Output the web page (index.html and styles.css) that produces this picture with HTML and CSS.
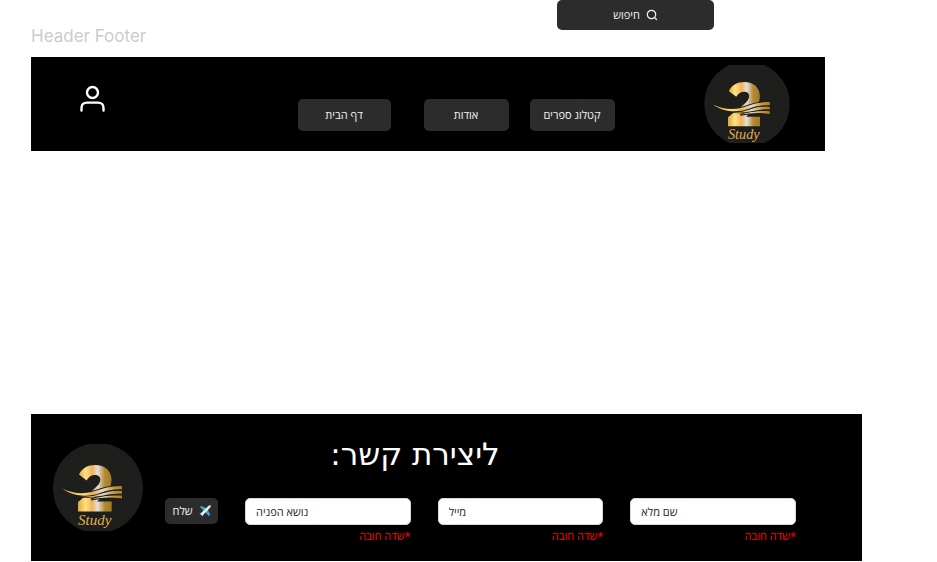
FILE: index.html
```html
<!DOCTYPE html>
<html lang="he">
<head>
<meta charset="utf-8">
<title>2 Study</title>
<link rel="stylesheet" href="styles.css">
</head>
<body>
<svg class="defs" aria-hidden="true">
  <defs>
    <linearGradient id="gold" gradientUnits="userSpaceOnUse" x1="25" y1="0" x2="59" y2="0">
      <stop offset="0" stop-color="#d9a93c"/>
      <stop offset=".22" stop-color="#ffe083"/>
      <stop offset=".42" stop-color="#eeb45c"/>
      <stop offset=".58" stop-color="#e4e0dc"/>
      <stop offset=".78" stop-color="#b58a35"/>
      <stop offset="1" stop-color="#a07a26"/>
    </linearGradient>
    <linearGradient id="wave" gradientUnits="userSpaceOnUse" x1="9" y1="0" x2="69" y2="0">
      <stop offset="0" stop-color="#c99a35"/>
      <stop offset=".35" stop-color="#ffe083"/>
      <stop offset=".5" stop-color="#e9b055"/>
      <stop offset=".68" stop-color="#e4dccb"/>
      <stop offset=".85" stop-color="#c79a3f"/>
      <stop offset="1" stop-color="#a67c28"/>
    </linearGradient>
    <symbol id="emblem" viewBox="0 0 90 90">
      <circle cx="45" cy="45" r="45" fill="#1e1e1c"/>
      <path fill="url(#gold)" d="M26 31.500C29 25 35 22 42 22C52 22 58.500 28 58.500 36.500C58.500 43 56 47 51 51.500L44 58.500H58.700V68.500H25V59L41 46C45 42.500 47.300 40 47.300 36.500C47.300 33.500 45 32 42 32C38.500 32 36 33.500 33.700 37.500Z"/>
      <g fill="url(#wave)" stroke="#1e1e1c" stroke-width="2" paint-order="stroke">
        <path d="M38 56.500C48 52.500 57 52 69 52.600V55.600C58 53.800 48 54.500 38 56.500Z"/>
        <path d="M27 53C44 53.500 50 46.800 69 47.800V50.800C52 49.500 44 56.500 27 53Z"/>
        <path d="M9 45.500C25 53 37 50 47 46.500C55 43.800 62 43 69 43V46.300C61 46 55 47 47 50C35 54.500 20 53.500 9 45.500Z"/>
      </g>
    </symbol>
  </defs>
</svg>

<div class="board">
  <div class="top">
    <h2 class="board-name">Header Footer</h2>
    <button class="btn search" type="button">
      <svg width="12" height="12" viewBox="0 0 12 12" aria-hidden="true"><g fill="none" stroke="#f3f3f3" stroke-width="1.200" stroke-linecap="round"><circle cx="5.500" cy="5.500" r="4.200"/><path d="M8.700 8.700L10.500 10.500"/></g></svg>
      <span dir="rtl">חיפוש</span>
    </button>
  </div>

  <header class="header">
    <a class="account" href="#" aria-label="חשבון">
      <svg width="26" height="28" viewBox="0 0 26 28" aria-hidden="true"><g fill="none" stroke="#fff" stroke-width="2.400" stroke-linecap="round"><circle cx="12.500" cy="7.500" r="5.500"/><path d="M1.500 25.500V23C1.500 19.500 3.500 17.600 7 17.600H18C21.500 17.600 23.500 19.500 23.500 23V25.500"/></g></svg>
    </a>
    <nav class="nav">
      <button class="btn home" type="button" dir="rtl">דף הבית</button>
      <button class="btn about" type="button" dir="rtl">אודות</button>
      <button class="btn catalog" type="button" dir="rtl">קטלוג ספרים</button>
    </nav>
    <svg class="logo" viewBox="0 4 90 82" role="img" aria-label="2 Study"><use href="#emblem" width="90" height="90"/><text class="script" x="25" y="82">Study</text></svg>
  </header>

  <main class="content"></main>

  <footer class="footer">
    <svg class="footer-logo" viewBox="0 1 90 87" role="img" aria-label="2 Study"><use href="#emblem" width="90" height="90"/><text class="script" x="25" y="82">Study</text></svg>
    <form class="contact">
      <h1 class="title" dir="rtl">ליצירת קשר:</h1>
      <div class="fields">
        <button class="btn send" type="button">
          <span dir="rtl">שלח</span>
          <svg width="12" height="12" viewBox="0 0 12 12" aria-hidden="true"><path fill="#3da5dc" d="M.800 2L2.500 .900L7.500 3.200L9 5L11.200 9.500L10 11.300L6.500 7.500L4.500 5.500Z"/><path fill="#e6eef3" d="M11.600 .300C10.500 -.100 9.500 .800 8.800 1.500L1.800 8.300L.400 8.600L2.300 9.700L3.300 11.600L3.800 10.200L10.600 3.300C11.500 2.400 12 1.200 11.600 .300Z"/></svg>
        </button>
        <div class="field"><input aria-label="נושא הפניה" value="נושא הפניה"><span class="required" dir="rtl">*שדה חובה</span></div>
        <div class="field"><input aria-label="מייל" value="מייל"><span class="required" dir="rtl">*שדה חובה</span></div>
        <div class="field"><input aria-label="שם מלא" value="שם מלא"><span class="required" dir="rtl">*שדה חובה</span></div>
      </div>
    </form>
  </footer>
</div>
</body>
</html>
```
FILE: styles.css
```css
* { box-sizing: border-box; }

body {
  margin: 0;
  background: #fff;
  font-family: "Noto Sans", "Open Sans", sans-serif;
  font-size: 11px;
  line-height: 16px;
}

.defs { position: absolute; width: 0; height: 0; }

.board {
  display: flex;
  flex-direction: column;
  min-height: 100vh;
  padding: 0 75px 1px 31px;
}

.top {
  display: flex;
  justify-content: space-between;
  align-items: flex-start;
  padding-right: 148px;
}

.board-name {
  margin: 0;
  padding: 25px 0 10px;
  color: #ccc;
  font: 400 17px/22px Inter, sans-serif;
}

.btn {
  display: flex;
  align-items: center;
  justify-content: center;
  gap: 6px;
  height: 32px;
  padding: 0;
  border: 0;
  border-radius: 5px;
  background: #2c2c2c;
  color: #f3f3f3;
  font: inherit;
}

.search { flex-direction: row-reverse; width: 157px; height: 30px; }

.header {
  display: flex;
  align-items: flex-start;
  justify-content: space-between;
  margin-right: 37px;
  padding: 8px 35px 8px 49px;
  background: #000;
}

.account { display: flex; padding-top: 20px; }

.nav { display: flex; padding: 34px 0 0 102px; }
.home { width: 93px; margin-right: 33px; }
.about { width: 85px; margin-right: 21px; }
.catalog { width: 85px; }

.logo { display: block; width: 86px; height: 78px; }
.footer-logo { display: block; flex: none; width: 90px; height: 87px; margin-top: 30px; }

.script {
  fill: #e0ae4e;
  font: italic 400 15px "Liberation Serif", serif;
}

.content { flex: 1; }

.footer {
  display: flex;
  gap: 22px;
  padding: 0 66px 17px 22px;
  background: #000;
}

.contact { flex: 1; }

.title {
  margin: 0;
  padding: 16px 131px 20px 0;
  color: #fff;
  font-family: "DejaVu Sans", sans-serif;
  font-size: 31px;
  font-weight: 400;
  line-height: 48px;
  text-align: center;
}

.fields { display: flex; gap: 27px; }

.field { flex: 1; min-width: 0; }

.send { width: 53px; height: 26px; }

.field input {
  display: block;
  width: 100%;
  height: 27px;
  padding: 0 10px;
  border: 1px solid #d9d9d9;
  border-radius: 5px;
  background: #fff;
  color: #1e1e1e;
  font: inherit;
}

.required {
  display: block;
  padding-top: 3px;
  color: #f00;
}
```
